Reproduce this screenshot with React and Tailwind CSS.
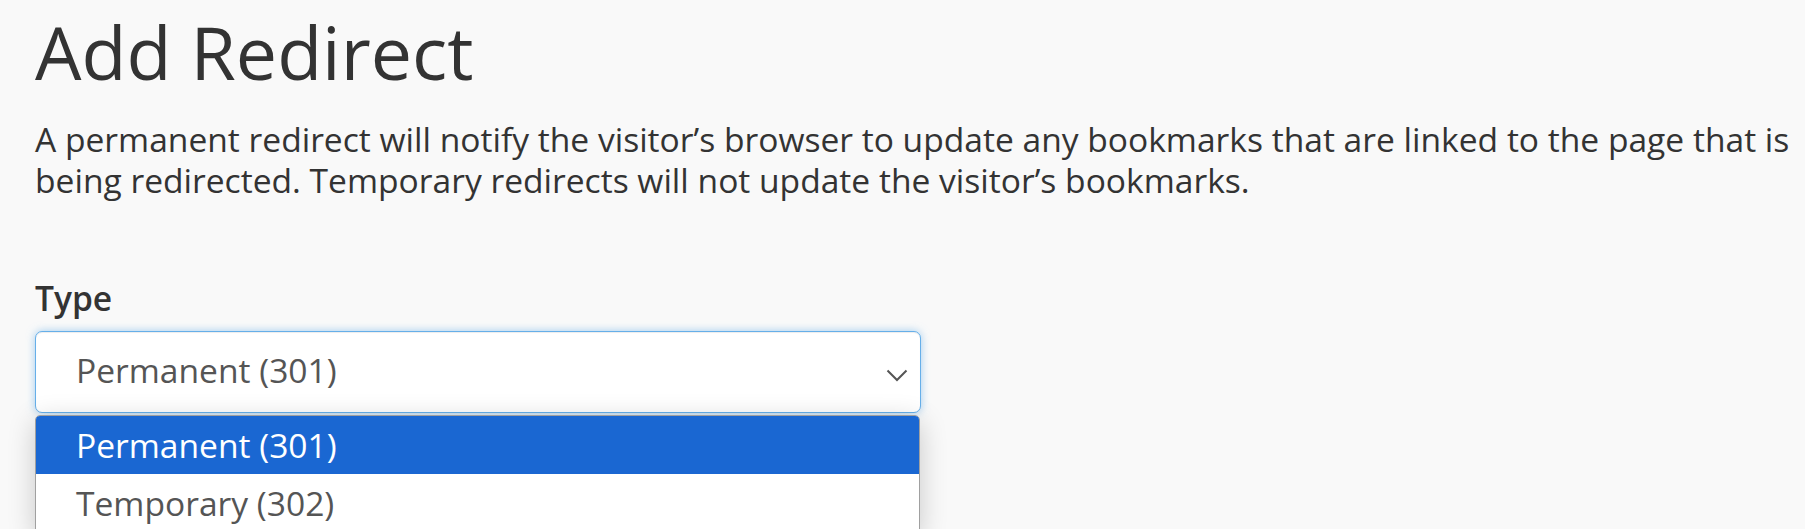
import React from "react";

export default function App() {
  return (
    <div className="min-h-screen w-full bg-[#f9f9f9] text-[#333]" style={{ fontFamily: '"Open Sans", sans-serif' }}>
      <div className="pl-[35px] pr-[10px]">
        <h1 className="pt-[12px] text-[73.5px] leading-[80px] font-normal text-[#333] whitespace-nowrap">Add Redirect</h1>
        <p className="mt-[27px] text-[33.6px] leading-[41px] text-[#333] whitespace-nowrap">
          A permanent redirect will notify the visitor’s browser to update any bookmarks that are linked to the page that is
          <br />
          being redirected. Temporary redirects will not update the visitor’s bookmarks.
        </p>
        <div className="mt-[77px] w-[886px]">
          <label className="block text-[33.6px] leading-[41px] font-semibold text-[#333]">Type</label>
          <div className="relative mt-[12px]">
            <div className="flex h-[82px] items-start justify-between rounded-[7px] border-[1.5px] border-[#66afe9] bg-white pl-[40px] pr-[12px] pt-[15px] shadow-[inset_0_1px_1px_rgba(0,0,0,0.075),0_0_8px_rgba(102,175,233,0.6)]">
              <span className="text-[33.6px] leading-[46px] text-[#555]">Permanent (301)</span>
              <svg width="22" height="14" viewBox="0 0 22 14" className="mt-[22px]" fill="none">
                <path d="M1.5 1.5 L11 11 L20.5 1.5" stroke="#555" strokeWidth="2" />
              </svg>
            </div>
            <div className="absolute left-0 top-[84px] w-[885px] overflow-hidden rounded-t-[5px] border border-[#a0a0a0] bg-white shadow-[0_6px_28px_rgba(0,0,0,0.2)]">
              <div className="flex h-[58px] items-center bg-[#1a67d2] pl-[40px] text-[33.6px] text-white">Permanent (301)</div>
              <div className="flex h-[58px] items-center pl-[40px] text-[33.6px] text-[#555]">Temporary (302)</div>
            </div>
          </div>
        </div>
      </div>
    </div>
  );
}
